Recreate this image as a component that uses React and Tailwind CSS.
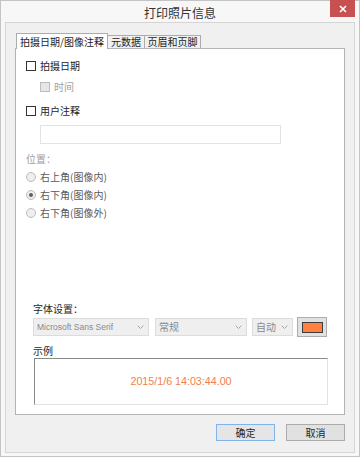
import React from 'react';

// Small Win8-style form bits
const Check = ({ label, disabled }) => (
  <div className="flex items-center h-[18px]">
    <span
      className={`w-[10px] h-[10px] border ${disabled ? 'border-[#bcbcbc] bg-[#e6e6e6]' : 'border-[#333] bg-white'}`}
    />
    <span className={`ml-[4px] leading-none ${disabled ? 'text-[#a0a0a0]' : 'text-[#1e1e1e]'}`}>{label}</span>
  </div>
);

const Radio = ({ label, checked }) => (
  <div className="flex items-center h-[18px]">
    <span className="w-[10px] h-[10px] rounded-full border border-[#bcbcbc] bg-[#eeeeee] flex items-center justify-center">
      {checked && <span className="w-[4px] h-[4px] rounded-full bg-[#606060]" />}
    </span>
    <span className="ml-[4px] leading-none text-[#5a5a5a]">{label}</span>
  </div>
);

const Chevron = () => (
  <svg width="7" height="4" viewBox="0 0 7 4" className="shrink-0">
    <path d="M0.5 0.5 L3.5 3.5 L6.5 0.5" fill="none" stroke="#a8a8a8" strokeWidth="1" />
  </svg>
);

const Combo = ({ children, className }) => (
  <div className={`h-[18px] flex items-center justify-between bg-[#efefef] border border-[#dcdcdc] pl-[3px] pr-[4px] text-[#8a8a8a] ${className}`}>
    <span className="leading-none">{children}</span>
    <Chevron />
  </div>
);

export default function App() {
  return (
    <div className="w-[360px] h-[457px] bg-[#f7f7f7] border border-[#c4c4c4] flex flex-col font-['Noto_Sans_CJK_SC',sans-serif] text-[10px] text-[#1e1e1e]">
      {/* title bar */}
      <div className="relative h-[21px] shrink-0 flex items-center justify-center">
        <span className="text-[12px] leading-none text-[#333] mt-[2px]">打印照片信息</span>
        <div className="absolute -top-px right-[4px] w-[25px] h-[17px] bg-[#c75050] flex items-center justify-center">
          <svg width="8" height="8" viewBox="0 0 8 8">
            <path d="M1 1 L7 7 M7 1 L1 7" stroke="#fff" strokeWidth="1.6" />
          </svg>
        </div>
      </div>

      {/* client area */}
      <div className="flex-1 mx-[4px] mb-[3px] border border-[#d5d5d5] bg-[#f0f0f0] pt-[10px] pl-[9px] pr-[9px] flex flex-col">
        {/* tabs */}
        <div className="flex items-end h-[15px]">
          <div className="relative z-10 ml-px -mb-px w-[92px] h-[16px] bg-white border-t border-l border-r border-[#acacac] flex items-center justify-center leading-none">
            拍摄日期/图像注释
          </div>
          <div className="w-[37px] h-[13px] bg-[#f0f0f0] border-t border-r border-[#acacac] flex items-center justify-center leading-none">
            元数据
          </div>
          <div className="w-[56px] h-[13px] bg-[#f0f0f0] border-t border-r border-[#acacac] flex items-center justify-center leading-none">
            页眉和页脚
          </div>
        </div>

        {/* tab panel */}
        <div className="h-[367px] bg-white border border-[#b4b4b4] flex flex-col pl-[10px]">
          <div className="mt-[8px]">
            <Check label="拍摄日期" />
          </div>
          <div className="mt-[3px] ml-[14px]">
            <Check label="时间" disabled />
          </div>
          <div className="mt-[6px]">
            <Check label="用户注释" />
          </div>
          <div className="mt-[5px] ml-[14px] w-[241px] h-[19px] border border-[#e3e3e3] bg-white" />

          <div className="mt-[8px] h-[14px] flex items-center text-[#a0a0a0] leading-none">位置：</div>
          <div className="mt-[2px]">
            <Radio label="右上角(图像内)" />
            <Radio label="右下角(图像内)" checked />
            <Radio label="右下角(图像外)" />
          </div>

          {/* font settings + preview */}
          <div className="mt-auto pl-[7px] pb-[9px]">
            <div className="h-[14px] flex items-center leading-none">字体设置：</div>
            <div className="mt-px flex items-center">
              <Combo className="w-[116px] font-['Liberation_Sans',sans-serif] text-[8.5px]">Microsoft Sans Serif</Combo>
              <Combo className="ml-[6px] w-[92px]">常规</Combo>
              <Combo className="ml-[5px] w-[41px]">自动</Combo>
              <div className="ml-[4px] w-[30px] h-[20px] bg-[#e1e1e1] border border-[#adadad] flex items-center justify-center">
                <span className="w-[21px] h-[11px] bg-[#ff8040] border border-[#3c3c3c]" />
              </div>
            </div>
            <div className="mt-[7px] h-[14px] flex items-center leading-none">示例</div>
            <div className="ml-px w-[294px] h-[47px] bg-white border-t border-l border-[#8a8a8a] border-r border-b border-r-[#e3e3e3] border-b-[#e3e3e3] flex items-center justify-center">
              <span className="font-['Liberation_Sans',sans-serif] text-[10.7px] text-[#f2804a] leading-none">2015/1/6 14:03:44.00</span>
            </div>
          </div>
        </div>

        {/* buttons */}
        <div className="mt-[9px] flex justify-end gap-[11px]">
          <button className="w-[59px] h-[17px] bg-[#e5e5e5] border border-[#7eb4ea] flex items-center justify-center leading-none text-[10px]">
            确定
          </button>
          <button className="w-[59px] h-[17px] bg-[#e1e1e1] border border-[#acacac] flex items-center justify-center leading-none text-[10px]">
            取消
          </button>
        </div>
      </div>
    </div>
  );
}
